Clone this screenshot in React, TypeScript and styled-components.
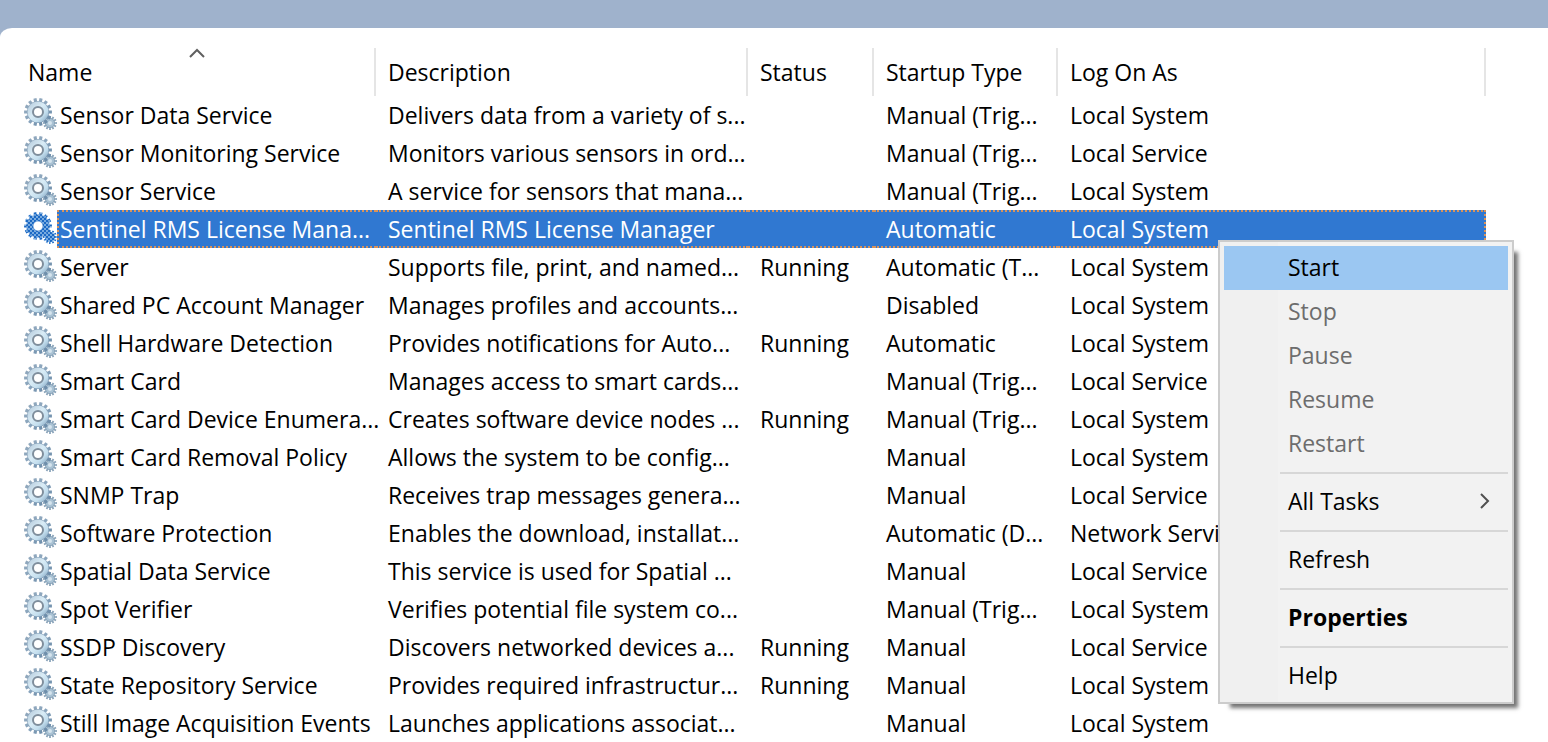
import React, { useId } from 'react';
import styled, { createGlobalStyle, css } from 'styled-components';

const GlobalStyle = createGlobalStyle`
  * { box-sizing: border-box; }
  body {
    margin: 0;
    background: #9fb2cc;
    color: #000;
    font-family: "Open Sans", "Noto Sans", sans-serif;
    font-size: 23px;
    overflow: hidden;
  }
`;

const Window = styled.div`
  padding-top: 28px;
`;

const Panel = styled.main`
  position: relative;
  padding: 20px 62px 0 0;
  background: #fff;
  border-top-left-radius: 12px 9px;
`;

const ServiceTable = styled.table`
  width: 100%;
  table-layout: fixed;
  border-collapse: separate;
  border-spacing: 0;
`;

const Column = styled.col<{ $width?: number }>`
  ${({ $width }) => $width && css`width: ${$width}px;`}
`;

const HeaderCell = styled.th<{ $first?: boolean }>`
  position: relative;
  height: 48px;
  padding: 0 0 0 ${({ $first }) => ($first ? 28 : 12)}px;
  border-right: 2px solid #e5e5e5;
  font-weight: 400;
  line-height: 32px;
  text-align: left;
  white-space: nowrap;
`;

const SortMark = styled.svg`
  position: absolute;
  top: 0;
  left: 188px;
  width: 18px;
  height: 10px;
`;

const Label = styled.span`
  flex: 1;
  min-width: 0;
  height: 38px;
  padding-left: 3px;
  line-height: 38px;
`;

const NameContent = styled.div`
  display: flex;
  padding-left: 24px;
`;

const Cell = styled.td`
  height: 38px;
  padding: 0 0 0 12px;
  line-height: 38px;
  white-space: nowrap;
`;

const NameCell = styled(Cell)`
  padding: 0;
`;

const focusDots = '2px dotted #d9935a';

const Row = styled.tr<{ $selected: boolean }>`
  ${({ $selected }) =>
    $selected &&
    css`
      color: #fff;
      ${Cell}:not(${NameCell}), ${Label} {
        background: #3078d1;
        border-top: ${focusDots};
        border-bottom: ${focusDots};
        line-height: 34px;
      }
      ${Label} {
        border-left: ${focusDots};
        padding-left: 1px;
      }
      ${Cell}:last-child {
        border-right: ${focusDots};
      }
    `}
`;

const GearSvg = styled.svg`
  flex: none;
  width: 33px;
  height: 38px;
`;

const Menu = styled.div`
  position: absolute;
  top: 212px;
  left: 1218px;
  width: 296px;
  padding: 4px;
  border: 2px solid #cccccc;
  background: linear-gradient(to right, #f0f0f0 58px, #f2f2f2 58px);
  box-shadow: 8px 8px 4px -4px #747474;
`;

const MenuItem = styled.button<{ $active?: boolean; $strong?: boolean }>`
  display: flex;
  align-items: center;
  justify-content: space-between;
  width: 100%;
  height: 44px;
  padding: 0 17px 2px 64px;
  border: 0;
  background: ${({ $active }) => ($active ? '#9bc7f2' : 'transparent')};
  color: #000;
  font: inherit;
  font-weight: ${({ $strong }) => ($strong ? 700 : 400)};
  text-align: left;
  &:disabled { color: #6d6d6d; }
`;

const Separator = styled.hr`
  height: 2px;
  margin: 6px 0 6px 56px;
  border: 0;
  background: #d7d7d7;
`;

const Arrow = styled.svg`
  width: 12px;
  height: 18px;
`;

function gearPath(cx: number, cy: number, outer: number, inner: number, teeth: number) {
  const points: string[] = [];
  const step = (Math.PI * 2) / teeth;
  for (let i = 0; i < teeth; i++) {
    const mid = i * step;
    const corners: [number, number][] = [
      [inner, -0.32],
      [outer, -0.25],
      [outer, 0.25],
      [inner, 0.32],
    ];
    corners.forEach(([r, t]) => {
      const a = mid + t * step;
      points.push(`${(cx + r * Math.cos(a)).toFixed(2)} ${(cy + r * Math.sin(a)).toFixed(2)}`);
    });
  }
  return `M${points.join('L')}Z`;
}

const BIG_GEAR = gearPath(14, 16, 14, 11, 14);
const SMALL_GEAR = gearPath(26, 27, 7, 5, 12);

function Gear({ selected }: { selected: boolean }) {
  const id = useId();
  return (
    <GearSvg viewBox="0 0 33 38" aria-hidden="true">
      <defs>
        <linearGradient id={`${id}t`} x1="0" y1="0" x2="1" y2="1">
          <stop offset="0" stopColor="#93a9bd" />
          <stop offset="0.5" stopColor="#8aa5bd" />
          <stop offset="1" stopColor="#5c7f9f" />
        </linearGradient>
        <linearGradient id={`${id}f`} x1="0" y1="0" x2="1" y2="1">
          <stop offset="0" stopColor="#b4c9da" />
          <stop offset="0.45" stopColor="#d9ecf6" />
          <stop offset="0.7" stopColor="#c3deee" />
          <stop offset="1" stopColor="#7b9db9" />
        </linearGradient>
        <pattern id={`${id}p`} width="4" height="4" patternUnits="userSpaceOnUse">
          <rect width="4" height="4" fill="#78abe0" />
          <rect width="2" height="2" fill="#1c69c4" />
          <rect x="2" y="2" width="2" height="2" fill="#1c69c4" />
        </pattern>
      </defs>
      <path d={SMALL_GEAR} fill={selected ? `url(#${id}p)` : '#8aa4ba'} />
      {!selected && <circle cx="26" cy="27" r="3" fill="#d5e4ee" stroke="#a9c2d4" strokeWidth="2" />}
      <path d={BIG_GEAR} fill={selected ? `url(#${id}p)` : `url(#${id}t)`} />
      {selected ? (
        <>
          <circle cx="14" cy="16" r="11.5" fill="none" stroke="#2e74c6" strokeOpacity="0.5" />
          <circle cx="14" cy="16" r="5" fill="#fff" stroke="#2e74c6" strokeOpacity="0.6" />
        </>
      ) : (
        <>
          <circle cx="14" cy="16" r="10.5" fill={`url(#${id}f)`} />
          <circle cx="14" cy="16" r="5" fill="#fff" stroke="#7f8e9c" strokeWidth="2" />
        </>
      )}
    </GearSvg>
  );
}

const SYS = 'Local System';
const SVC = 'Local Service';
const TRIG = 'Manual (Trig...';

const services: [string, string, string, string, string][] = [
  ['Sensor Data Service', 'Delivers data from a variety of s...', '', TRIG, SYS],
  ['Sensor Monitoring Service', 'Monitors various sensors in ord...', '', TRIG, SVC],
  ['Sensor Service', 'A service for sensors that mana...', '', TRIG, SYS],
  ['Sentinel RMS License Mana...', 'Sentinel RMS License Manager', '', 'Automatic', SYS],
  ['Server', 'Supports file, print, and named...', 'Running', 'Automatic (T...', SYS],
  ['Shared PC Account Manager', 'Manages profiles and accounts...', '', 'Disabled', SYS],
  ['Shell Hardware Detection', 'Provides notifications for Auto...', 'Running', 'Automatic', SYS],
  ['Smart Card', 'Manages access to smart cards...', '', TRIG, SVC],
  ['Smart Card Device Enumera...', 'Creates software device nodes ...', 'Running', TRIG, SYS],
  ['Smart Card Removal Policy', 'Allows the system to be config...', '', 'Manual', SYS],
  ['SNMP Trap', 'Receives trap messages genera...', '', 'Manual', SVC],
  ['Software Protection', 'Enables the download, installat...', '', 'Automatic (D...', 'Network Service'],
  ['Spatial Data Service', 'This service is used for Spatial ...', '', 'Manual', SVC],
  ['Spot Verifier', 'Verifies potential file system co...', '', TRIG, SYS],
  ['SSDP Discovery', 'Discovers networked devices a...', 'Running', 'Manual', SVC],
  ['State Repository Service', 'Provides required infrastructur...', 'Running', 'Manual', SYS],
  ['Still Image Acquisition Events', 'Launches applications associat...', '', 'Manual', SYS],
];

const SELECTED = 3;

export default function App() {
  return (
    <Window>
      <GlobalStyle />
      <Panel>
        <ServiceTable>
          <colgroup>
            <Column $width={376} />
            <Column $width={372} />
            <Column $width={126} />
            <Column $width={184} />
            <Column />
          </colgroup>
          <thead>
            <tr>
              <HeaderCell $first scope="col" aria-sort="ascending">
                Name
                <SortMark viewBox="0 0 18 10" aria-hidden="true">
                  <path d="M2 9L9 2L16 9" fill="none" stroke="#606060" strokeWidth="2" />
                </SortMark>
              </HeaderCell>
              <HeaderCell scope="col">Description</HeaderCell>
              <HeaderCell scope="col">Status</HeaderCell>
              <HeaderCell scope="col">Startup Type</HeaderCell>
              <HeaderCell scope="col">Log On As</HeaderCell>
            </tr>
          </thead>
          <tbody>
            {services.map(([name, ...rest], i) => (
              <Row key={name} $selected={i === SELECTED}>
                <NameCell>
                  <NameContent>
                    <Gear selected={i === SELECTED} />
                    <Label>{name}</Label>
                  </NameContent>
                </NameCell>
                {rest.map((text, c) => (
                  <Cell key={c}>{text}</Cell>
                ))}
              </Row>
            ))}
          </tbody>
        </ServiceTable>
        <Menu role="menu">
          <MenuItem role="menuitem" $active>Start</MenuItem>
          <MenuItem role="menuitem" disabled>Stop</MenuItem>
          <MenuItem role="menuitem" disabled>Pause</MenuItem>
          <MenuItem role="menuitem" disabled>Resume</MenuItem>
          <MenuItem role="menuitem" disabled>Restart</MenuItem>
          <Separator />
          <MenuItem role="menuitem" aria-haspopup="menu">
            All Tasks
            <Arrow viewBox="0 0 12 18" aria-hidden="true">
              <path d="M2 2L9 9L2 16" fill="none" stroke="#505050" strokeWidth="2" />
            </Arrow>
          </MenuItem>
          <Separator />
          <MenuItem role="menuitem">Refresh</MenuItem>
          <Separator />
          <MenuItem role="menuitem" $strong>Properties</MenuItem>
          <Separator />
          <MenuItem role="menuitem">Help</MenuItem>
        </Menu>
      </Panel>
    </Window>
  );
}
